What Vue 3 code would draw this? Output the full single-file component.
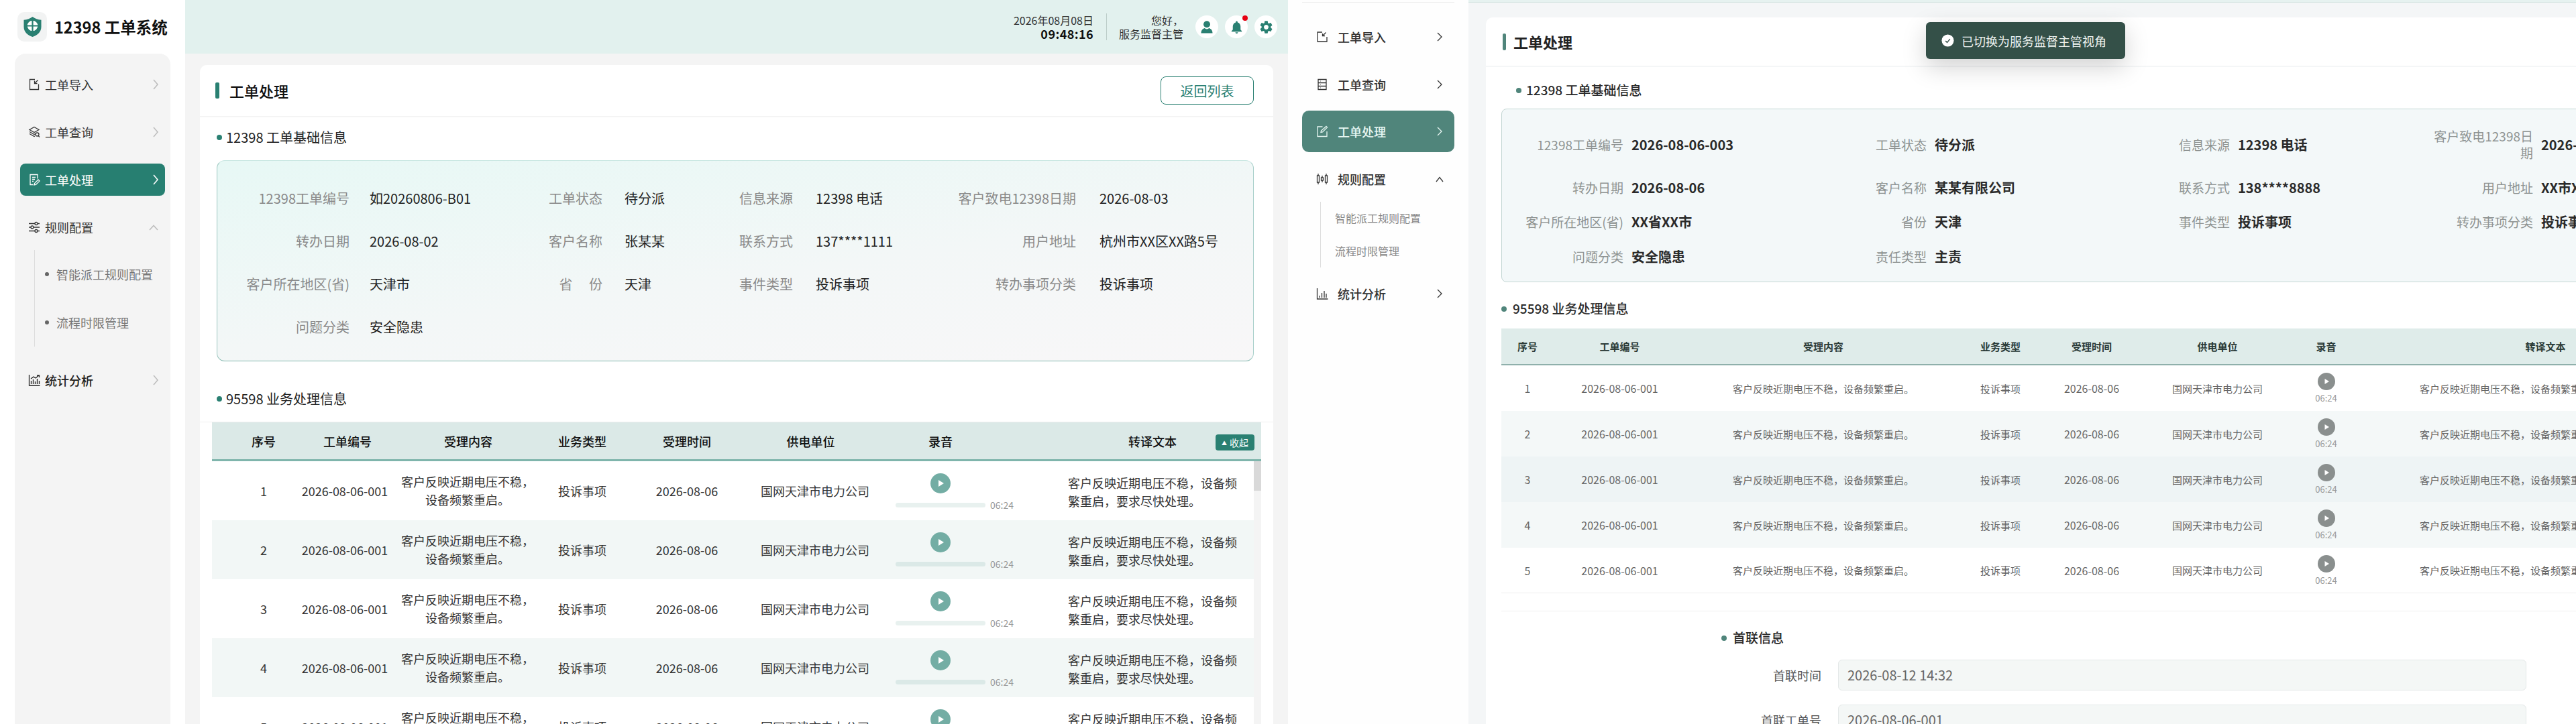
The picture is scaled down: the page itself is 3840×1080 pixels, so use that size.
<template>
  <div class="page">
    <!-- left screen: patrol view -->
    <section class="screen">
      <aside class="side">
        <div class="brand">
          <div class="logo">
            <svg viewBox="0 0 27 30" width="27" height="30">
              <path d="M13.5 0C17 2.6 21.5 4.2 26.5 4.8V15C26.5 22.6 20.8 27.6 13.5 30 6.2 27.6.5 22.6.5 15V4.8C5.5 4.2 10 2.6 13.5 0Z" fill="#2a8072" />
              <circle cx="13.5" cy="13.5" r="7.8" fill="#fff" />
              <path d="M13.5 5v17M5 13.5h17" stroke="#2a8072" stroke-width="2.2" />
            </svg>
          </div>
          <span class="brand-name">12398 工单系统</span>
        </div>
        <nav class="nav">
          <template v-for="item in navA" :key="item.label">
            <div class="nav-item" :class="{ active: item.active, strong: item.strong }">
              <svg class="nav-icon" viewBox="0 0 18 18" fill="none" stroke="currentColor" stroke-width="1.3">
                <path :d="item.icon" />
              </svg>
              <span class="nav-label">{{ item.label }}</span>
              <svg v-if="item.open" class="chev-up" viewBox="0 0 14 9" fill="none" stroke="currentColor" stroke-width="1.6">
                <path d="M1 8l6-6.5L13 8" />
              </svg>
              <svg v-else class="chev" viewBox="0 0 8 16" fill="none" stroke="currentColor" stroke-width="1.6">
                <path d="M1 1l6 7-6 7" />
              </svg>
            </div>
            <div v-if="item.open" class="submenu">
              <div v-for="sub in subMenu" :key="sub" class="sub-item">{{ sub }}</div>
            </div>
          </template>
        </nav>
      </aside>

      <div class="main">
        <header class="topbar">
          <div class="clock">
            <div>2026年08月08日</div>
            <div class="clock-time">09:48:16</div>
          </div>
          <div class="user">
            <div>您好，</div>
            <div>服务监督主管</div>
          </div>
          <div class="round-btns">
            <span class="round-btn">
              <svg viewBox="0 0 20 20" width="20" height="20" fill="#2a8072">
                <circle cx="10" cy="6.2" r="5" />
                <path d="M1.5 19.5c0-4.4 2.6-6.6 5.2-7.4 1 .9 2.1 1.3 3.3 1.3s2.300-.4 3.300-1.300c2.600.8 5.200 3 5.200 7.400z" />
              </svg>
            </span>
            <span class="round-btn has-dot">
              <svg viewBox="0 0 24 24" width="23" height="23" fill="#2a8072">
                <path d="M12 22c1.100 0 2-.9 2-2h-4c0 1.100.89 2 2 2zm6-6v-5c0-3.070-1.640-5.640-4.500-6.320V4c0-.83-.67-1.500-1.500-1.500s-1.500.67-1.500 1.500v.68C7.630 5.360 6 7.920 6 11v5l-2 2v1h16v-1l-2-2z" />
              </svg>
            </span>
            <span class="round-btn">
              <svg viewBox="0 0 24 24" width="23" height="23" fill="#2a8072">
                <path :d="gearPath" />
              </svg>
            </span>
          </div>
        </header>

        <div class="content">
          <div class="card">
            <div class="card-head">
              <span class="title-bar"></span>
              <span class="card-title">工单处理</span>
              <button class="back-btn">返回列表</button>
            </div>
            <div class="card-body">
              <div class="section-head">12398 工单基础信息</div>
              <div class="info-box">
                <template v-for="f in fieldsA" :key="f[0]">
                  <div class="field-label">{{ f[0] }}</div>
                  <div class="field-value">{{ f[1] }}</div>
                </template>
              </div>
              <div class="section-head section-second">95598 业务处理信息</div>
              <div class="table-wrap">
                <div class="thead">
                  <div v-for="h in headers" :key="h" class="th">{{ h }}</div>
                  <button class="collapse-btn"><i>▲</i>收起</button>
                </div>
                <div class="tbody">
                  <div v-for="n in 5" :key="n" class="tr" :class="{ stripe: n % 2 === 0 }">
                    <div class="td">{{ n }}</div>
                    <div class="td td-no">2026-08-06-001</div>
                    <div class="td td-wrap">客户反映近期电压不稳，<br />设备频繁重启。</div>
                    <div class="td">投诉事项</div>
                    <div class="td">2026-08-06</div>
                    <div class="td td-unit">国网天津市电力公司</div>
                    <div class="td td-audio">
                      <span class="play">
                        <svg viewBox="0 0 30 30" width="30" height="30"><path d="M12 10l8 5-8 5z" fill="#fff" /></svg>
                      </span>
                      <div class="audio-row">
                        <span class="audio-bar"></span>
                        <span class="audio-time">06:24</span>
                      </div>
                    </div>
                    <div class="td td-text">客户反映近期电压不稳，设备频繁重启，要求尽快处理。</div>
                  </div>
                  <span class="scroll-thumb"></span>
                </div>
              </div>
            </div>
          </div>
        </div>
      </div>
    </section>

    <!-- right screen: supervisor view, scrolled a little -->
    <section class="screen screen-b">
      <aside class="side-b">
        <div class="side-b-top"></div>
        <nav class="nav-b">
          <template v-for="item in navB" :key="item.label">
            <div class="nav-b-item" :class="{ active: item.active }">
              <svg class="nav-icon" viewBox="0 0 18 18" fill="none" stroke="currentColor" stroke-width="1.3">
                <path :d="item.icon" />
              </svg>
              <span class="nav-label">{{ item.label }}</span>
              <svg v-if="item.open" class="chev-up-b" viewBox="0 0 14 9" fill="none" stroke="currentColor" stroke-width="1.3">
                <path d="M2 8l5-6.500L12 8" />
              </svg>
              <svg v-else class="chev-b" viewBox="0 0 8 14" fill="none" stroke="currentColor" stroke-width="1.3">
                <path d="M1 1l6 6-6 6" />
              </svg>
            </div>
            <div v-if="item.open" class="submenu-b">
              <div v-for="sub in subMenu" :key="sub" class="sub-b-item">{{ sub }}</div>
            </div>
          </template>
        </nav>
      </aside>

      <div class="main-b">
        <div class="topbar-b"></div>
        <div class="card-b">
          <div class="card-b-head">
            <span class="title-bar-b"></span>
            <span class="card-b-title">工单处理</span>
          </div>
          <div class="card-b-body">
            <div class="sec-b sec-b-first">12398 工单基础信息</div>
            <div class="info-b">
              <div v-for="f in fieldsB" :key="f[0]" class="pair-b">
                <div class="label-b">{{ f[0] }}</div>
                <div class="value-b">{{ f[1] }}</div>
              </div>
            </div>
            <div class="sec-b sec-b-second">95598 业务处理信息</div>
            <div class="table-b">
              <div class="thead-b">
                <div v-for="h in headers" :key="h" class="th-b">{{ h }}</div>
              </div>
              <div v-for="n in 5" :key="n" class="tr-b" :class="rowClass(n)">
                <div class="td-b">{{ n }}</div>
                <div class="td-b">2026-08-06-001</div>
                <div class="td-b td-b-small">客户反映近期电压不稳，设备频繁重启。</div>
                <div class="td-b td-b-small">投诉事项</div>
                <div class="td-b">2026-08-06</div>
                <div class="td-b td-b-small">国网天津市电力公司</div>
                <div class="td-b td-b-audio">
                  <span class="play-b">
                    <svg viewBox="0 0 26 26" width="26" height="26"><path d="M10.500 9l6.500 4-6.500 4z" fill="#fff" /></svg>
                  </span>
                  <span class="time-b">06:24</span>
                </div>
                <div class="td-b td-b-small">客户反映近期电压不稳，设备频繁重启，要求尽快处理。</div>
              </div>
            </div>
            <div class="divider-b"></div>
            <div class="first-contact">
              <div class="sec-b">首联信息</div>
              <div v-for="r in firstContact" :key="r[0]" class="form-row">
                <label class="form-label">{{ r[0] }}</label>
                <div class="form-input">{{ r[1] }}</div>
              </div>
            </div>
          </div>
        </div>
      </div>

      <div class="toast">
        <svg viewBox="0 0 20 20" width="19" height="19">
          <circle cx="10" cy="10" r="9.500" fill="#fff" />
          <path d="M6.500 10.500l2.500 2.500 4.500-5.500" fill="none" stroke="#345048" stroke-width="1.500" />
        </svg>
        <span>已切换为服务监督主管视角</span>
      </div>
    </section>
  </div>
</template>

<script setup>
const gearPath =
  "M19.14 12.94c.04-.3.06-.61.06-.94 0-.32-.02-.64-.07-.94l2.03-1.58c.18-.14.23-.41.12-.61l-1.92-3.32c-.12-.22-.37-.29-.59-.22l-2.39.96c-.5-.38-1.03-.7-1.62-.94l-.36-2.54c-.04-.24-.24-.41-.48-.41h-3.84c-.24 0-.43.17-.47.41l-.36 2.54c-.59.24-1.13.57-1.62.94l-2.39-.96c-.22-.08-.47 0-.59.22L2.74 8.87c-.12.21-.08.47.12.61l2.03 1.58c-.05.3-.09.63-.09.94s.02.64.07.94l-2.03 1.58c-.18.14-.23.41-.12.61l1.92 3.32c.12.22.37.29.59.22l2.39-.96c.5.38 1.03.7 1.62.94l.36 2.54c.05.24.24.41.48.41h3.84c.24 0 .44-.17.47-.41l.36-2.54c.59-.24 1.13-.56 1.62-.94l2.39.96c.22.08.47 0 .59-.22l1.92-3.32c.12-.22.07-.47-.12-.61l-2.01-1.58zM12 15.6c-1.98 0-3.6-1.62-3.6-3.6s1.62-3.6 3.6-3.6 3.6 1.62 3.6 3.6-1.62 3.6-3.6 3.6z";

const subMenu = ["智能派工规则配置", "流程时限管理"];

const navA = [
  { label: "工单导入", icon: "M10 1.500H2.500v15h13V8.500M14.500 2.500 9.500 7.500M9.500 3.500v4h4" },
  { label: "工单查询", icon: "M9 1.500l7 4-7 4-7-4zM2 8.500l7 4 2-1M2 11.500l7 4 1-.5M13.500 10a2.500 2.500 0 1 0 0 5 2.500 2.500 0 0 0 0-5zM15.300 14.800l1.700 1.700" },
  { label: "工单处理", active: true, icon: "M14 7.500V1.500H3v15h4.500M6 5.500h5M6 8.500h4M6 11.500h2M15 9l2 2-5.500 5.500-2.500.5.5-2.500z" },
  { label: "规则配置", open: true, icon: "M1 3.500h9M14 3.500h3M1 9h3M8 9h9M1 14.500h9M14 14.500h3M10 3.500a2 2 0 1 0 4 0 2 2 0 0 0-4 0zM4 9a2 2 0 1 0 4 0 2 2 0 0 0-4 0zM10 14.500a2 2 0 1 0 4 0 2 2 0 0 0-4 0z" },
  { label: "统计分析", strong: true, icon: "M1.500 1v16h16M4.500 15v-5M7.500 15V8M10.500 15v-4M13.500 15V7M16.500 15v-5M4 7l4-3 3 2 5-4M13 2h3.500v3" },
];

const navB = [
  { label: "工单导入", icon: "M9 2H2v14h14V9M14.500 2.500 9.500 7.500M9.500 4v3.500H13" },
  { label: "工单查询", icon: "M3 1.500h12v15H3zM3 6.500h12M3 11.500h12M6 4h.5M6 9h.5M6 14h.5" },
  { label: "工单处理", active: true, icon: "M9.500 2H2v14.500h14V9M15 1.500l1.500 1.500-7 7-2.500.5.5-2.500z" },
  { label: "规则配置", open: true, icon: "M3 1v3M3 14v3M1.500 4h3v10h-3zM9 4v3M9 11v3M7.500 7h3v4h-3zM15 1v3M15 14v3M13.500 4h3v10h-3z" },
  { label: "统计分析", icon: "M1.500 1v16h16M5 15v-3M8.500 15V8M12 15V5M15 15v-6" },
];

const headers = ["序号", "工单编号", "受理内容", "业务类型", "受理时间", "供电单位", "录音", "转译文本"];

const fieldsA = [
  ["12398工单编号", "如20260806-B01"],
  ["工单状态", "待分派"],
  ["信息来源", "12398 电话"],
  ["客户致电12398日期", "2026-08-03"],
  ["转办日期", "2026-08-02"],
  ["客户名称", "张某某"],
  ["联系方式", "137****1111"],
  ["用户地址", "杭州市XX区XX路5号"],
  ["客户所在地区(省)", "天津市"],
  ["省　 份", "天津"],
  ["事件类型", "投诉事项"],
  ["转办事项分类", "投诉事项"],
  ["问题分类", "安全隐患"],
];

const fieldsB = [
  ["12398工单编号", "2026-08-06-003"],
  ["工单状态", "待分派"],
  ["信息来源", "12398 电话"],
  ["客户致电12398日期", "2026-08-06"],
  ["转办日期", "2026-08-06"],
  ["客户名称", "某某有限公司"],
  ["联系方式", "138****8888"],
  ["用户地址", "XX市XX区XX路"],
  ["客户所在地区(省)", "XX省XX市"],
  ["省份", "天津"],
  ["事件类型", "投诉事项"],
  ["转办事项分类", "投诉事项"],
  ["问题分类", "安全隐患"],
  ["责任类型", "主责"],
];

const firstContact = [
  ["首联时间", "2026-08-12 14:32"],
  ["首联工单号", "2026-08-06-001"],
];

const rowClass = (n) => {
  if (n === 3) return "hover";
  return n % 2 === 0 ? "stripe" : "";
};
</script>

<style scoped>
.page {
  display: flex;
  width: 3840px;
  height: 1080px;
  overflow: hidden;
  font-family: "Noto Sans CJK SC", "Noto Sans", sans-serif;
  color: #222;
}

.screen {
  position: relative;
  display: flex;
  flex: 0 0 1920px;
  width: 1920px;
  height: 1080px;
  overflow: hidden;
  background: #f4f4f4;
}

/* ---------- left screen ---------- */
.side {
  flex: 0 0 276px;
  background: #fff;
  display: flex;
  flex-direction: column;
}

.brand {
  display: flex;
  align-items: center;
  height: 80px;
  padding-left: 26px;
}

.logo {
  display: flex;
  align-items: center;
  justify-content: center;
  width: 44px;
  height: 44px;
  border-radius: 10px;
  background: #f2f3f3;
}

.brand-name {
  margin-left: 11px;
  font-size: 23.500px;
  font-weight: 700;
  color: #111;
}

.nav {
  flex: 1;
  margin: 0 22px;
  padding: 22px 8px 0;
  border-radius: 16px 16px 0 0;
  background: #f4f4f4;
}

.nav-item {
  display: flex;
  align-items: center;
  height: 48px;
  margin-bottom: 23px;
  padding: 0 10px 0 12px;
  border-radius: 8px;
  font-size: 18px;
  color: #333;
}

.nav-item.active {
  background: #277f71;
  color: #fff;
}

.nav-item.strong {
  font-weight: 500;
  color: #222;
}

.nav-icon {
  flex: 0 0 18px;
  width: 18px;
  height: 18px;
}

.nav-label {
  margin-left: 7px;
  flex: 1;
}

.chev {
  width: 8px;
  height: 16px;
  color: #bdbdbd;
}

.nav-item.active .chev {
  color: #fff;
}

.chev-up {
  width: 14px;
  height: 9px;
  color: #bdbdbd;
}

.submenu {
  margin: -13px 0 26px 21px;
  border-left: 1px solid #dcdcdc;
}

.sub-item {
  position: relative;
  display: flex;
  align-items: center;
  height: 72px;
  padding-left: 32px;
  font-size: 18px;
  color: #777;
}

.sub-item::before {
  content: "";
  position: absolute;
  left: 15px;
  top: 33px;
  width: 6px;
  height: 6px;
  border-radius: 50%;
  background: #666;
}

.main {
  flex: 1;
  min-width: 0;
  display: flex;
  flex-direction: column;
}

.topbar {
  display: flex;
  align-items: center;
  justify-content: flex-end;
  height: 80px;
  padding-right: 16px;
  background: #e2f1ee;
  font-size: 16px;
  line-height: 20px;
  color: #333;
}

.clock {
  text-align: right;
  padding-right: 19px;
  border-right: 1px solid #bccdc9;
}

.clock-time {
  font-size: 18px;
  font-weight: 700;
  letter-spacing: 0.4px;
  color: #111;
}

.user {
  margin-left: 18px;
  text-align: right;
}

.round-btns {
  display: flex;
  gap: 10px;
  margin-left: 18px;
}

.round-btn {
  position: relative;
  display: flex;
  align-items: center;
  justify-content: center;
  width: 34px;
  height: 34px;
  border-radius: 50%;
  background: #fff;
}

.has-dot::after {
  content: "";
  position: absolute;
  top: 0;
  right: 0;
  width: 8px;
  height: 8px;
  border-radius: 50%;
  background: #e60012;
}

.content {
  flex: 1;
  min-height: 0;
  padding: 17px 22px 0;
}

.card {
  height: 100%;
  border-radius: 10px 10px 0 0;
  background: #fff;
}

.card-head {
  display: flex;
  align-items: center;
  height: 76px;
  padding: 0 29px 0 23px;
  border-bottom: 2px solid #f4f4f4;
}

.title-bar {
  width: 6px;
  height: 24px;
  border-radius: 2px;
  background: #2a8072;
}

.card-title {
  flex: 1;
  margin-left: 15px;
  font-size: 22px;
  font-weight: 500;
  color: #111;
}

.back-btn {
  width: 139px;
  height: 42px;
  padding: 0;
  border: 1.5px solid #2a8072;
  border-radius: 8px;
  background: #fff;
  font-family: inherit;
  font-size: 20px;
  color: #2a8072;
}

.card-body {
  padding: 0 18px;
}

.section-head {
  position: relative;
  height: 40px;
  line-height: 40px;
  margin-top: 10px;
  padding-left: 21px;
  font-size: 20px;
  font-weight: 400;
  color: #222;
}

.section-head::before {
  content: "";
  position: absolute;
  left: 7px;
  top: 16px;
  width: 8px;
  height: 8px;
  border-radius: 50%;
  background: #2a8072;
}

.section-second {
  margin-top: 36px;
}

.info-box {
  display: grid;
  grid-template-columns: 197px 296px 81px 202px 82px 238px 184px 264px;
  grid-auto-rows: 64px;
  align-items: center;
  height: 300px;
  box-sizing: border-box;
  margin: 14px 11px 0 7px;
  padding-top: 23px;
  border: 1px solid;
  border-color: #c6e6e1 #a8d0ca #7fb5ac #9ac5be;
  border-radius: 12px;
  background: linear-gradient(172deg, #e7f8f5 0%, #f3f7f7 55%, #f8f7f8 100%);
  font-size: 20px;
}

.field-label {
  text-align: right;
  white-space: pre;
  color: #8a8a8a;
}

.field-value {
  padding-left: 30px;
  color: #222;
  white-space: nowrap;
}

.field-value:nth-child(8n + 4) {
  padding-left: 33px;
}

.field-value:nth-child(8n + 6) {
  padding-left: 34px;
}

.field-value:nth-child(8n) {
  padding-left: 35px;
}

.table-wrap {
  margin: 14px -18px 0;
  padding: 0 18px;
  border-top: 1px solid #eee;
}

.thead,
.tr {
  display: grid;
  grid-template-columns: 130px 144px 216px 124px 188px 181px 257px 324px;
}

.thead {
  position: relative;
  height: 58px;
  box-sizing: border-box;
  border-bottom: 3px solid #7fb5ac;
  background: #dbe9e7;
}

.th {
  display: flex;
  align-items: center;
  justify-content: center;
  font-size: 18px;
  font-weight: 500;
  color: #111;
}

.th:first-child {
  padding-left: 24px;
}

.th:nth-child(7) {
  padding-right: 51px;
}

.collapse-btn {
  position: absolute;
  top: 18px;
  right: 10px;
  width: 58px;
  height: 24px;
  padding: 0;
  border: 0;
  border-radius: 4px;
  background: #2a8072;
  font-family: inherit;
  font-size: 14px;
  color: #fff;
}

.collapse-btn i {
  margin-right: 4px;
  font-size: 8px;
  font-style: normal;
  vertical-align: 2px;
}

.tbody {
  position: relative;
  width: 1553px;
  padding-right: 11px;
}

.tr {
  height: 88px;
  width: 1553px;
  grid-template-columns: 130px 144px 216px 124px 188px 181px 257px 313px;
  font-size: 18px;
  line-height: 27px;
  color: #333;
}

.tr.stripe {
  background: #f2f7f6;
}

.td {
  display: flex;
  align-items: center;
  justify-content: center;
  text-align: center;
}

.td:first-child {
  padding-left: 24px;
}

.td-no {
  padding-right: 8px;
  white-space: nowrap;
}

.td-wrap {
  padding-right: 2px;
}

.td-unit {
  padding-left: 13px;
  white-space: nowrap;
}

.td-audio {
  display: block;
  padding: 18px 0 0 36px;
}

.play {
  display: block;
  width: 30px;
  height: 30px;
  margin-left: 52px;
  border-radius: 50%;
  background: #73ada4;
}

.audio-row {
  display: flex;
  align-items: center;
  gap: 7px;
  height: 20px;
  margin-top: 7px;
}

.audio-bar {
  flex: 0 0 134px;
  height: 7px;
  border-radius: 4px;
  background: #e8f1ef;
}

.stripe .audio-bar {
  background: #dbe9e7;
}

.audio-time {
  font-size: 14px;
  color: #999;
}

.td-text {
  display: block;
  align-self: center;
  justify-self: start;
  width: 252px;
  margin-left: 36px;
  text-align: left;
  margin-top: 4px;
}

.scroll-thumb {
  position: absolute;
  top: 0;
  right: 0;
  width: 11px;
  height: 44px;
  background: #d9d9d9;
}

.tbody::before {
  content: "";
  position: absolute;
  top: 0;
  right: 0;
  bottom: 0;
  width: 11px;
  background: #f4f4f4;
}

/* ---------- right screen ---------- */
.screen-b {
  background: #f4f6f7;
}

.side-b {
  flex: 0 0 269px;
  background: #fefefe;
}

.side-b-top {
  height: 3px;
  margin: 0 21px;
  border-bottom: 1px solid #eee;
}

.nav-b {
  padding: 20px 21px 0;
}

.nav-b-item {
  display: flex;
  align-items: center;
  height: 62px;
  margin-bottom: 8.700px;
  padding: 0 18px 0 21px;
  border-radius: 10px;
  font-size: 18px;
  font-weight: 500;
  color: #333;
}

.nav-b-item.active {
  background: #50857b;
  color: #e8f7f3;
}

.nav-b-item .nav-label {
  margin-left: 14px;
}

.chev-b {
  width: 8px;
  height: 14px;
}

.chev-up-b {
  width: 14px;
  height: 9px;
  margin-right: -3px;
}

.submenu-b {
  margin: -6px 0 8px 27px;
  border-left: 1px solid #ddd;
}

.sub-b-item {
  display: flex;
  align-items: center;
  height: 49px;
  padding-left: 21px;
  font-size: 16px;
  color: #888;
}

.main-b {
  flex: 1;
  min-width: 0;
}

.topbar-b {
  height: 3px;
  border-bottom: 1px solid #d6e5e2;
  background: #e6f2f0;
}

.card-b {
  width: 1880px;
  height: 1100px;
  margin: 22px 0 0 26px;
  border-radius: 10px 0 0 0;
  background: #fff;
}

.card-b-head {
  display: flex;
  align-items: center;
  height: 72px;
  padding-left: 25px;
  border-bottom: 2px solid #f4f6f7;
}

.title-bar-b {
  width: 5px;
  height: 25px;
  border-radius: 2px;
  background: #50857b;
}

.card-b-title {
  margin-left: 11px;
  font-size: 22px;
  font-weight: 700;
  color: #222;
}

.card-b-body {
  padding: 0 23px;
}

.sec-b {
  position: relative;
  height: 40px;
  line-height: 40px;
  padding-left: 17px;
  font-size: 19px;
  font-weight: 500;
  color: #2a2a2a;
}

.sec-b::before {
  content: "";
  position: absolute;
  left: 0;
  top: 17px;
  width: 8px;
  height: 8px;
  border-radius: 50%;
  background: #50857b;
}

.sec-b-first {
  margin: 14px 0 0 22px;
  padding-left: 15px;
}

.sec-b-second {
  margin-top: 19px;
  padding-left: 17px;
}

.info-b {
  display: grid;
  grid-template-columns: repeat(4, 452px);
  row-gap: 26.500px;
  align-items: center;
  align-content: start;
  box-sizing: border-box;
  height: 259px;
  margin-top: 8px;
  padding: 27px 0 0 33px;
  border: 1.500px solid #c3d6d3;
  border-radius: 8px;
  background: #f3f8f9;
}

.pair-b {
  display: flex;
  align-items: center;
  gap: 12px;
}

.label-b {
  flex: 0 0 148px;
  text-align: right;
  font-size: 19px;
  line-height: 25px;
  color: #8e9392;
}

.value-b {
  font-size: 20px;
  font-weight: 600;
  line-height: 25px;
  color: #2a2a2a;
  white-space: nowrap;
}

.table-b {
  margin-top: 10px;
  width: 1832px;
}

.thead-b,
.tr-b {
  display: grid;
  grid-template-columns: 78px 197px 410px 118px 154px 221px 103px 551px;
}

.thead-b {
  height: 55px;
  box-sizing: border-box;
  border-bottom: 2px solid #8fb0ab;
  background: #dfecea;
}

.th-b {
  display: flex;
  align-items: center;
  justify-content: center;
  font-size: 15px;
  font-weight: 700;
  color: #2b3b38;
}

.tr-b {
  height: 68px;
  font-size: 16px;
  color: #666;
}

.tr-b:last-child {
  box-sizing: border-box;
  border-bottom: 1px solid #eee;
}

.tr-b.stripe {
  background: #f4f8f8;
}

.tr-b.hover {
  background: #eef4f5;
}

.td-b {
  display: flex;
  align-items: center;
  justify-content: center;
  white-space: nowrap;
}

.td-b-small {
  font-size: 15px;
}

.td-b-audio {
  flex-direction: column;
  justify-content: flex-start;
  padding-top: 11px;
}

.play-b {
  display: block;
  width: 26px;
  height: 26px;
  border-radius: 50%;
  background: #8a8f8e;
}

.time-b {
  margin-top: 3px;
  font-size: 13px;
  line-height: 18px;
  color: #999;
}

.divider-b {
  width: 1832px;
  height: 1px;
  margin-top: 26px;
  background: #f0f0f0;
}

.first-contact {
  margin: 19px 0 0 328px;
}

.first-contact .sec-b {
  padding-left: 17px;
}

.form-row {
  display: flex;
  align-items: center;
  gap: 25px;
  margin-top: 13px;
  margin-bottom: 21px;
}

.form-row + .form-row {
  margin-top: 0;
}

.form-label {
  flex: 0 0 149px;
  text-align: right;
  font-size: 18px;
  color: #555;
}

.form-input {
  width: 1026px;
  height: 46px;
  box-sizing: border-box;
  padding-left: 13px;
  border: 1.500px solid #e4e8e8;
  border-radius: 6px;
  background: #f4f7f6;
  font-size: 20px;
  line-height: 43px;
  color: #666;
}

.toast {
  position: absolute;
  top: 33px;
  left: 951px;
  display: flex;
  align-items: center;
  gap: 11px;
  width: 297px;
  height: 55px;
  box-sizing: border-box;
  padding-left: 23px;
  border-radius: 6px;
  background: #345048;
  box-shadow: 0 12px 36px rgba(0, 0, 0, 0.18);
  font-size: 18px;
  color: #eef3f1;
}
</style>

<style>
html,
body {
  margin: 0;
  padding: 0;
}
</style>
